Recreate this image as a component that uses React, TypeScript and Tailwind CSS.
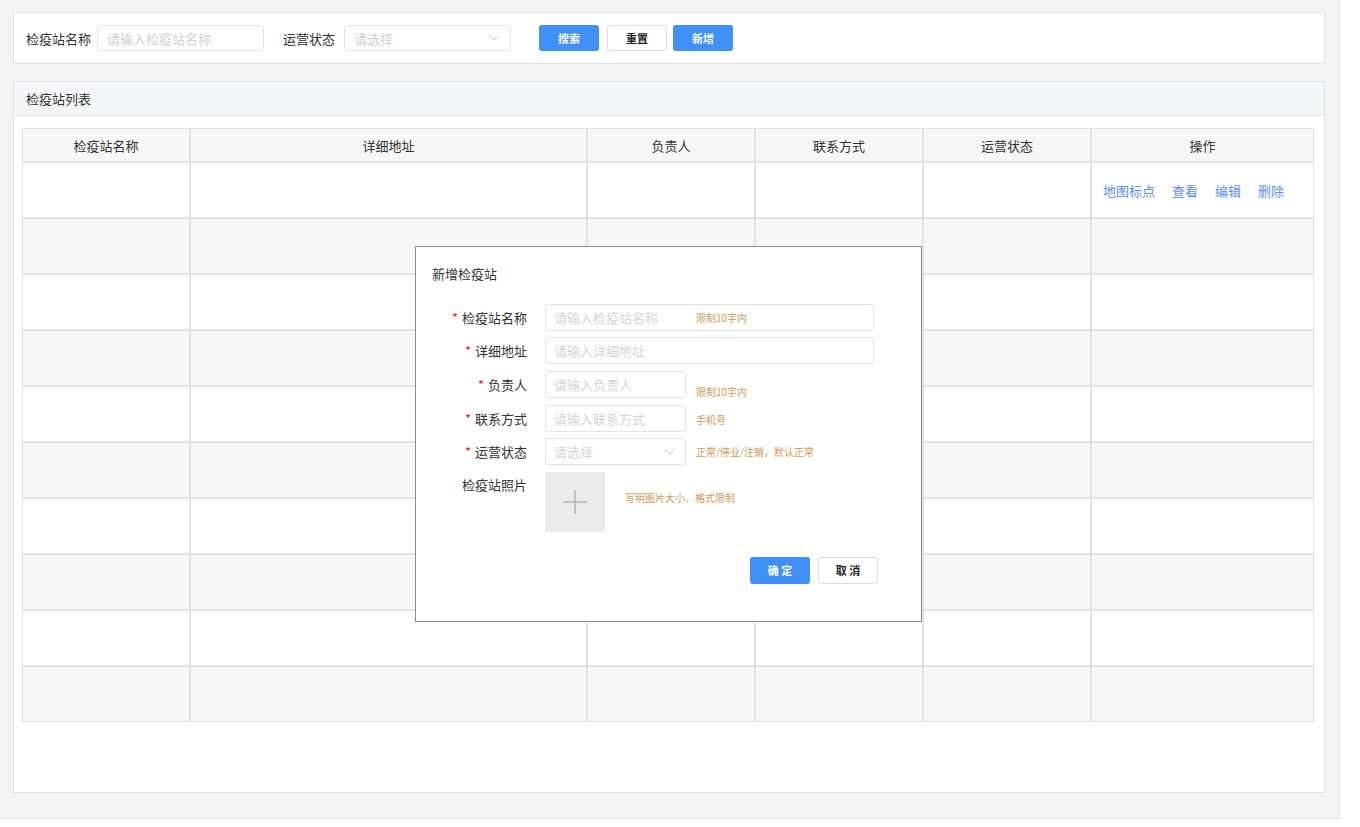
import React from "react";

const cols = ["检疫站名称", "详细地址", "负责人", "联系方式", "运营状态", "操作"];

function Chevron({ className }: { className?: string }) {
  return (
    <svg className={className} width="10" height="6" viewBox="0 0 10 6" fill="none">
      <path d="M0.5 0.5 L5 5 L9.5 0.5" stroke="#c8c8c8" strokeWidth="1" />
    </svg>
  );
}

export default function App() {
  const rows = Array.from({ length: 10 });
  return (
    <div className="relative w-[1360px] h-[827px] bg-white font-['Noto_Sans_CJK_SC','Noto_Sans',sans-serif] text-[#333] text-[13px] leading-none">
      <div className="w-[1340px] h-[819px] bg-[#f3f3f3] border-r border-b border-[#e2e2e2] pt-[12px] pl-[13px]">
        {/* search card */}
        <div className="w-[1312px] h-[52px] bg-white border border-[#e2e2e2] flex items-center pl-[12px]">
          <span className="text-[13px]">检疫站名称</span>
          <div className="ml-[6px] w-[167px] h-[26px] border border-[#e2e2e2] rounded-[3px] flex items-center px-[9px] text-[#cfcfcf]">
            请输入检疫站名称
          </div>
          <span className="ml-[19px]">运营状态</span>
          <div className="ml-[9px] w-[167px] h-[26px] border border-[#e2e2e2] rounded-[3px] flex items-center justify-between pl-[9px] pr-[11px] text-[#cfcfcf]">
            <span>请选择</span>
            <Chevron />
          </div>
          <button className="ml-[28px] w-[60px] h-[26px] rounded-[3px] bg-[#4190f7] text-white text-[11px] font-bold flex items-center justify-center">
            搜索
          </button>
          <button className="ml-[8px] w-[60px] h-[26px] rounded-[3px] bg-white border border-[#dcdcdc] text-[#222] text-[11px] font-bold flex items-center justify-center">
            重置
          </button>
          <button className="ml-[6px] w-[60px] h-[26px] rounded-[3px] bg-[#4190f7] text-white text-[11px] font-bold flex items-center justify-center">
            新增
          </button>
        </div>

        {/* list card */}
        <div className="mt-[17px] w-[1312px] h-[712px] bg-white border border-[#e2e2e2]">
          <div className="h-[34px] bg-[#f4f5f9] border-b border-[#e2e2e2] flex items-center pl-[12px]">
            检疫站列表
          </div>
          <div className="ml-[8px] mt-[12px] w-[1292px] grid grid-cols-[168px_397px_168px_168px_168px_223px]">
            {cols.map((c) => (
              <div
                key={c}
                className="h-[34px] bg-[#f6f6f6] border border-[#e2e2e2] flex items-center justify-center text-[13px] text-[#333]"
              >
                {c}
              </div>
            ))}
            {rows.map((_, r) =>
              cols.map((c, ci) => (
                <div
                  key={r + "-" + c}
                  className={
                    "h-[56px] border border-[#e2e2e2] " +
                    (r % 2 === 1 ? "bg-[#f6f6f6] " : "bg-white ") +
                    (ci === 5 && r === 0 ? "flex items-center pl-[11px] gap-[17px] text-[13px] text-[#5b8ef5]" : "")
                  }
                >
                  {ci === 5 && r === 0 ? (
                    <>
                      <span>地图标点</span>
                      <span>查看</span>
                      <span>编辑</span>
                      <span>删除</span>
                    </>
                  ) : null}
                </div>
              ))
            )}
          </div>
        </div>
      </div>

      {/* modal */}
      <div className="absolute left-[415px] top-[246px] w-[507px] h-[376px] bg-white border border-[#8a8a8a]">
        <div className="pl-[16px] pt-[20px] text-[13px] text-[#333]">新增检疫站</div>
        <div className="mt-[24px]">
          {/* row 1 */}
          <div className="flex items-center h-[27px]">
            <div className="w-[111px] text-right">
              <span className="text-[#f5222d] mr-[4px]">*</span>检疫站名称
            </div>
            <div className="relative ml-[18px] w-[329px] h-[27px] border border-[#e2e2e2] rounded-[3px] flex items-center px-[8px] text-[#d4d4d4]">
              请输入检疫站名称
              <span className="absolute left-[150px] top-[8px] text-[10px] text-[#cf9a57]">限制10字内</span>
            </div>
          </div>
          {/* row 2 */}
          <div className="flex items-center h-[27px] mt-[6px]">
            <div className="w-[111px] text-right">
              <span className="text-[#f5222d] mr-[4px]">*</span>详细地址
            </div>
            <div className="ml-[18px] w-[329px] h-[27px] border border-[#e2e2e2] rounded-[3px] flex items-center px-[8px] text-[#d4d4d4]">
              请输入详细地址
            </div>
          </div>
          {/* row 3 */}
          <div className="flex items-center h-[27px] mt-[7px]">
            <div className="w-[111px] text-right">
              <span className="text-[#f5222d] mr-[4px]">*</span>负责人
            </div>
            <div className="ml-[18px] w-[141px] h-[27px] border border-[#e2e2e2] rounded-[3px] flex items-center px-[8px] text-[#d4d4d4]">
              请输入负责人
            </div>
            <span className="ml-[10px] mt-[15px] text-[10px] text-[#cf9a57]">限制10字内</span>
          </div>
          {/* row 4 */}
          <div className="flex items-center h-[27px] mt-[7px]">
            <div className="w-[111px] text-right">
              <span className="text-[#f5222d] mr-[4px]">*</span>联系方式
            </div>
            <div className="ml-[18px] w-[141px] h-[27px] border border-[#e2e2e2] rounded-[3px] flex items-center px-[8px] text-[#d4d4d4]">
              请输入联系方式
            </div>
            <span className="ml-[10px] mt-[3px] text-[10px] text-[#cf9a57]">手机号</span>
          </div>
          {/* row 5 */}
          <div className="flex items-center h-[27px] mt-[6px]">
            <div className="w-[111px] text-right">
              <span className="text-[#f5222d] mr-[4px]">*</span>运营状态
            </div>
            <div className="ml-[18px] w-[141px] h-[27px] border border-[#e2e2e2] rounded-[3px] flex items-center justify-between pl-[8px] pr-[10px] text-[#d4d4d4]">
              <span>请选择</span>
              <Chevron />
            </div>
            <span className="ml-[10px] mt-[1px] text-[10px] text-[#cf9a57]">正常/停业/注销，默认正常</span>
          </div>
          {/* row 6 */}
          <div className="flex items-start mt-[7px]">
            <div className="w-[111px] text-right pt-[6px]">检疫站照片</div>
            <div className="ml-[18px] w-[60px] h-[60px] bg-[#ebebeb] flex items-center justify-center">
              <svg width="26" height="26" viewBox="0 0 26 26">
                <path d="M13 1 V25 M1 13 H25" stroke="#9a9a9a" strokeWidth="1" />
              </svg>
            </div>
            <span className="ml-[20px] mt-[21px] text-[10px] text-[#cf9a57]">写明图片大小、格式限制</span>
          </div>
        </div>
        {/* buttons */}
        <div className="flex justify-end mt-[25px] pr-[43px]">
          <button className="w-[60px] h-[27px] rounded-[3px] bg-[#4190f7] text-white text-[11px] font-bold flex items-center justify-center">
            确 定
          </button>
          <button className="ml-[8px] w-[60px] h-[27px] rounded-[3px] bg-white border border-[#dcdcdc] text-[#222] text-[11px] font-bold flex items-center justify-center">
            取 消
          </button>
        </div>
      </div>
    </div>
  );
}
